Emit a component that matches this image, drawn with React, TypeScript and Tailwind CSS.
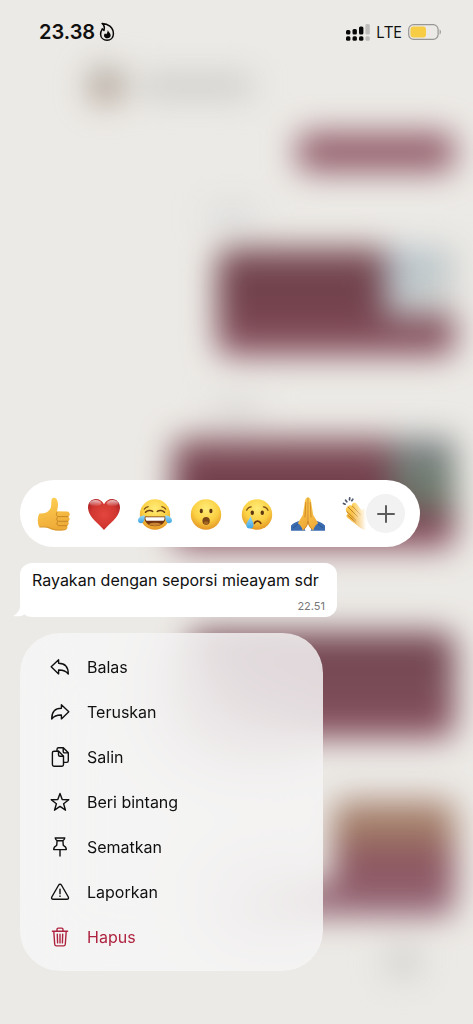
import type { ReactNode } from 'react';

function Flame() {
  return (
    <svg viewBox="0 0 16 20" className="h-5 w-4" fill="none" stroke="#080808" strokeWidth="1.5" strokeLinejoin="round">
      <path d="M3.1 1.4C8.5 1.3 14.6 5.3 14.4 11.9c-.1 3.8-2.8 6.3-6.3 6.3-3.6 0-6.400-2.400-6.500-6-.1-2.300.7-3.700 1.700-5.400l1.700 1.700C5.900 5.700 5.200 3.300 3.100 1.400z" />
      <path d="M8.900 8c0 1.700 2.800 3 2.800 5.300 0 1.800-1.500 3-3.300 3s-3.400-1.100-3.400-2.900c0-.9.5-1.600 1.100-2.100.3.600.6.900 1.100 1 .9-1 1.400-2.300 1.700-4.300z" fill="#080808" stroke="none" />
    </svg>
  );
}

function Signal() {
  return (
    <svg viewBox="0 0 24 17" className="h-[17px] w-6" fill="#080808">
      <rect x="0" y="6" width="4.400" height="4.600" rx="1.500" />
      <rect x="6.500" y="5" width="4.400" height="5.600" rx="1.500" />
      <rect x="13" y="2.500" width="4.400" height="8.100" rx="1.500" />
      <rect x="0" y="12.300" width="4.400" height="4.400" rx="1.500" />
      <rect x="6.500" y="12.300" width="4.400" height="4.400" rx="1.500" />
      <rect x="13" y="12.300" width="4.400" height="4.400" rx="1.500" />
      <g fill="#bebdbb">
        <rect x="19.400" y="0" width="4.400" height="10.600" rx="1.500" />
        <rect x="19.400" y="12.300" width="4.400" height="4.400" rx="1.500" />
      </g>
    </svg>
  );
}

function Battery() {
  return (
    <svg viewBox="0 0 34 16" className="h-4 w-[34px]" fill="none">
      <rect x=".7" y=".7" width="29.400" height="14.600" rx="4.800" stroke="#989694" strokeWidth="1.200" />
      <rect x="2.500" y="2.500" width="15.500" height="11" rx="3" fill="#f7cd45" />
      <path d="M31.600 5.500c1.700.6 1.700 4.400 0 5z" fill="#989694" />
    </svg>
  );
}

function Gradients() {
  return (
    <svg className="absolute h-0 w-0" aria-hidden="true">
      <defs>
        <radialGradient id="face" cx=".5" cy=".3" r=".75">
          <stop offset="0" stopColor="#ffec78" />
          <stop offset=".55" stopColor="#fbd043" />
          <stop offset="1" stopColor="#e08c20" />
        </radialGradient>
        <linearGradient id="skin" x1="0" y1="0" x2=".3" y2="1">
          <stop offset="0" stopColor="#ffd254" />
          <stop offset="1" stopColor="#efab38" />
        </linearGradient>
        <radialGradient id="heart" cx=".5" cy=".5" r=".65">
          <stop offset="0" stopColor="#e2463d" />
          <stop offset=".6" stopColor="#d13630" />
          <stop offset="1" stopColor="#a51d22" />
        </radialGradient>
        <linearGradient id="shine" x1="0" y1="0" x2="0" y2="1">
          <stop offset="0" stopColor="#fff" stopOpacity=".7" />
          <stop offset="1" stopColor="#fff" stopOpacity="0" />
        </linearGradient>
        <linearGradient id="tear" x1="0" y1="0" x2="0" y2="1">
          <stop offset="0" stopColor="#9bdcf8" />
          <stop offset="1" stopColor="#3fa4e4" />
        </linearGradient>
      </defs>
    </svg>
  );
}

function ThumbsUp() {
  return (
    <g transform="translate(1 0)">
      <path d="M2.500 16.600c5.500.2 8.600-1.300 10.500-4.300 1-1.600 1.300-3.700 1.300-6.300 0-2.700.4-5.200 2.500-5.200 2.800 0 4.200 3.300 4.200 7 0 2.500-.6 4.200-1 6.500l10 .2c3.300.1 3.600 4.400 1.100 5.200 2.100.9 1.800 4.100-.3 4.700 1.600 1.100 1.100 3.800-.8 4.300 1 1.500.4 3.800-1.700 4.200-3.700.7-8.300.9-12.300.1-3.500-.7-5.800-2.700-9-2.700L2.500 30.200C.2 27 .3 19.500 2.500 16.600z" fill="url(#skin)" />
      <path d="M31 19.600h-9.500c-2.300-.1-2.900-2.600-1.300-4.300M31 24.300h-9.300c-2-.2-2.600-2.200-1.400-4.100M30 28.700h-8.300c-1.800-.3-2.300-2.300-1.200-4" fill="none" stroke="#c08222" strokeWidth=".9" strokeLinecap="round" />
      <path d="M2.500 30.100c3-.1 5.500-.2 7.500.1 3.200.4 5.500 2.300 9 2.700 3 .4 6.500.1 9.500-.3" fill="none" stroke="#c98c2a" strokeWidth=".7" />
    </g>
  );
}

function Heart() {
  return (
    <>
      <path d="M17 33C12 27 1 19.800 1 10.500 1 5.500 4.500 2 8.800 2c3.700 0 6.500 2 8.200 5.200C18.700 4 21.500 2 25.200 2 29.500 2 33 5.500 33 10.500 33 19.800 22 27 17 33z" fill="url(#heart)" />
      <ellipse cx="8.500" cy="6.300" rx="5.800" ry="3.200" fill="url(#shine)" />
      <ellipse cx="25.500" cy="6.300" rx="5.800" ry="3.200" fill="url(#shine)" />
    </>
  );
}

function Joy() {
  return (
    <>
      <circle cx="17" cy="17.500" r="15.200" fill="url(#face)" />
      <path d="M7.500 15.300c1.500-2 5.200-2.400 7.200-.9M19.300 14.400c2-1.500 5.700-1.100 7.200.9" fill="none" stroke="#6b3d10" strokeWidth="1.500" strokeLinecap="round" />
      <path d="M6.300 12.200c.9-1.300 2.200-2.200 3.900-2.500M27.700 12.200c-.9-1.300-2.200-2.200-3.900-2.500" fill="none" stroke="#7e5017" strokeWidth="1.200" strokeLinecap="round" />
      <path d="M6.200 19.500h21.600c.3 5.500-4.300 9.800-10.800 9.800S5.900 25 6.200 19.500z" fill="#70320f" />
      <path d="M7.400 20.200h19.200c.1 1.600-.4 3.300-1.300 3.600H8.700c-.9-.3-1.400-2-1.300-3.600z" fill="#fff" />
      <path d="M10.500 27c3.500-1.800 9.500-1.800 13 0-3.500 2.500-9.500 2.500-13 0z" fill="#c98532" />
      <path d="M6.800 18.200c-3.800.4-6.800 2.400-6.800 5.200 0 1.900 1.600 2.900 3.100 2.800 3-.2 3.700-4.400 3.700-8zM27.200 18.200c3.800.4 6.800 2.400 6.800 5.200 0 1.900-1.600 2.900-3.100 2.800-3-.2-3.700-4.400-3.700-8z" fill="url(#tear)" />
    </>
  );
}

function Surprised() {
  return (
    <>
      <circle cx="17" cy="17.500" r="15.200" fill="url(#face)" />
      <ellipse cx="12.300" cy="14" rx="1.600" ry="2.300" fill="#5e3611" />
      <ellipse cx="21.900" cy="14" rx="1.600" ry="2.300" fill="#5e3611" />
      <ellipse cx="17.100" cy="23.800" rx="3.700" ry="3.900" fill="#7a4617" />
      <ellipse cx="17.100" cy="25.700" rx="2.500" ry="1.500" fill="#a46723" />
    </>
  );
}

function Crying() {
  return (
    <>
      <circle cx="17" cy="17.500" r="15.200" fill="url(#face)" />
      <ellipse cx="12.300" cy="15.700" rx="1.700" ry="2.300" fill="#5e3611" />
      <ellipse cx="22.300" cy="15.700" rx="1.700" ry="2.300" fill="#5e3611" />
      <path d="M6.600 13.200c.9-1.900 2.500-3.200 4.600-3.400M28 13.200c-.9-1.900-2.500-3.200-4.600-3.400" fill="none" stroke="#7e5017" strokeWidth="1.300" strokeLinecap="round" />
      <path d="M14.300 26.300c1.300-2.900 5.300-2.900 6.600 0" fill="none" stroke="#70390f" strokeWidth="1.600" strokeLinecap="round" />
      <path d="M10.600 19c1.100 3.600 2.900 6.300 2.900 9a3.600 3.600 0 0 1-7.200 0c0-2.700 3.100-5.300 4.300-9z" fill="url(#tear)" />
    </>
  );
}

function Praying() {
  return (
    <>
      <path d="M0 28.500c2.500-2.600 5.700-4.100 9-4.800l5.500 10.100H0zM34 28.500c-2.500-2.600-5.700-4.100-9-4.800l-5.500 10.100H34z" fill="#3c6cb0" />
      <path d="M16.900.5c-2.300 0-2.900 2.500-3.300 6L11.800 18l-5 8.200c2.400 1.600 4.200 4.100 5 7.300 2.900-1.700 4.500-4.600 5.100-8z" fill="url(#skin)" />
      <path d="M17.100.5c2.300 0 2.900 2.500 3.300 6L22.200 18l5 8.200c-2.400 1.600-4.200 4.100-5 7.300-2.900-1.700-4.500-4.600-5.100-8z" fill="url(#skin)" />
      <path d="M17 1v24.500M14.800 5.500L14 20M19.200 5.500L20 20M17 25c-.6 3-2 5.500-4 7M17 25c.6 3 2 5.500 4 7" fill="none" stroke="#c97c1b" strokeWidth=".8" strokeLinecap="round" />
      <path d="M2 31l5-4M32 31l-5-4" stroke="#285695" strokeWidth="1" />
    </>
  );
}

function Clapping() {
  return (
    <>
      <g fill="none" stroke="#4c566b" strokeWidth="1.700" strokeLinecap="round">
        <path d="M1.500 6.400l1.600.8M3.600 3.200l1.200 1.600M7.700.900l-.2 1.900M10.800 2.200l-1 1.500" />
      </g>
      <path d="M5.500 10c.8-2.200 3.200-2.400 4.800-.8L9.900 7.600C11 5.200 13.600 5.300 15 7.200l5.300 7c-.5-2.400 2.200-3.300 3-1 .8 3.500 1.200 6.200 3.200 8.600l5 6-6 6.200c-4-.8-7.500-2.700-10.500-5.700l-9.500-7.500c-1.900-1.700-1.100-3.600.6-3.600l-1.500-2.300c-1.400-2-.7-4.300.9-4.900z" fill="url(#skin)" />
      <path d="M6 10l9.500 9.500M4.900 14.700l9 8.600M10.300 9l8.500 9M6 18.500l7.500 6.500" fill="none" stroke="#c07c1d" strokeWidth="1" strokeLinecap="round" />
    </>
  );
}

const reactions: { name: string; art: ReactNode }[] = [
  { name: 'Jempol', art: <ThumbsUp /> },
  { name: 'Hati', art: <Heart /> },
  { name: 'Tertawa', art: <Joy /> },
  { name: 'Terkejut', art: <Surprised /> },
  { name: 'Menangis', art: <Crying /> },
  { name: 'Terima kasih', art: <Praying /> },
  { name: 'Tepuk tangan', art: <Clapping /> },
];

const actions: { label: string; art: ReactNode; danger?: boolean }[] = [
  { label: 'Balas', art: <path d="M8.600 2.700v3.500c6.200 0 9.700 3.600 9.700 10.800-2.400-3.200-5.200-4.100-9.700-4v3.900L1.200 9.800z" /> },
  { label: 'Teruskan', art: <path d="M11.400 2.700v3.500c-6.200 0-9.700 3.600-9.700 10.800 2.400-3.200 5.200-4.100 9.700-4v3.900l7.400-7.100z" /> },
  {
    label: 'Salin',
    art: (
      <>
        <path d="M4 4.200h4.700l4.800 5v8.400c0 1-.6 1.600-1.600 1.600H4c-1 0-1.600-.6-1.600-1.600V5.800c0-1 .6-1.600 1.600-1.600z" />
        <path d="M8.500 4.300v3.500c0 1 .5 1.500 1.500 1.500h3.400" />
        <path d="M7 4V2.500C7 1.500 7.600.8 8.600.8h4.700l5 5v8c0 1-.6 1.600-1.600 1.600h-3M13.200 1v3.400c0 1 .5 1.500 1.500 1.500H18" />
      </>
    ),
  },
  { label: 'Beri bintang', art: <path d="M10 1.400l2.200 6.200 6.600.2-5.200 4 1.900 6.400-5.500-3.800-5.500 3.800 1.900-6.400-5.200-4 6.600-.2z" /> },
  {
    label: 'Sematkan',
    art: (
      <>
        <path d="M5.200 1h9.600c-.2 1.300-.9 2.100-1.900 2.700l.4 4.700c2 .9 3 2.200 3 4.200H3.700c0-2 1-3.300 3-4.200l.4-4.700C6.100 3.100 5.400 2.300 5.200 1z" />
        <path d="M10 12.800v6.300M7.400 3.700h5.200" />
      </>
    ),
  },
  {
    label: 'Laporkan',
    art: (
      <>
        <path d="M8.700 3c.6-1 2.100-1 2.700 0l6.900 12c.6 1.100-.1 2.300-1.300 2.300H3.100c-1.200 0-1.900-1.200-1.300-2.300z" />
        <path d="M10 7.200v4.500M10 14v.4" />
      </>
    ),
  },
  {
    label: 'Hapus',
    art: (
      <>
        <path d="M2.400 4.200h15.200M7 4V2.400c0-.8.500-1.300 1.300-1.300h3.400c.8 0 1.300.5 1.300 1.300V4M3.800 4.400l.9 12.900c.1 1 .7 1.600 1.700 1.600h7.200c1 0 1.600-.6 1.700-1.600l.9-12.900" />
        <path d="M7.300 7.300l.3 8.600M10 7.300v8.600M12.700 7.300l-.3 8.600" />
      </>
    ),
    danger: true,
  },
];

function BlurredChat() {
  return (
    <div className="pointer-events-none absolute inset-0 overflow-hidden bg-[#eceae6]" aria-hidden="true">
      <div className="flex flex-col pr-[18px] blur-[16px]">
        <div className="mt-[68px] flex items-center gap-4 pl-[88px]">
          <div className="h-9 w-9 rounded-full bg-linear-to-b from-[#9c9c94] to-[#b79c8b]" />
          <div className="h-5 w-28 bg-[#c8c8c5]" />
        </div>
        <div className="mt-7 h-10 w-[158px] self-end rounded-xl bg-[#935e6b]" />
        <div className="mt-9 ml-[208px] h-4 w-12 bg-[#d4d7d8]" />
        <div className="mt-6 flex h-[108px] w-[238px] self-end rounded-xl bg-linear-to-b from-[#784c53] via-[#703f4a] to-[#8f5866]">
          <div className="ml-auto h-[68px] w-[70px] bg-linear-to-br from-[#abbac8] via-[#c0c9ca] to-[#dad6d2]" />
        </div>
        <div className="mt-[46px] ml-[212px] h-4 w-12 bg-[#d5d4d2]" />
        <div className="mt-5 flex h-[110px] w-[282px] self-end rounded-xl bg-linear-to-b from-[#865761] via-[#6d3846] to-[#8c5262]">
          <div className="ml-auto h-[72px] w-16 bg-linear-to-b from-[#7c8286] to-[#667561]" />
        </div>
        <div className="mt-[84px] h-[106px] w-[266px] self-end rounded-xl bg-linear-to-b from-[#734450] via-[#784c57] to-[#8a5060]" />
        <div className="mt-[62px] h-[84px] w-[122px] self-end rounded-t-xl bg-linear-to-b from-[#ac8878] via-[#a07a62] via-45% to-[#8d5862] to-60%" />
        <div className="h-8 w-[236px] self-end rounded-b-xl bg-[#926271]" />
        <div className="mt-8 mr-9 h-7 w-8 self-end bg-[#cfcecc]" />
      </div>
    </div>
  );
}

export default function App() {
  return (
    <div className="relative flex min-h-screen flex-col overflow-hidden font-['Inter','Liberation_Sans',sans-serif] text-[#101010]">
      <BlurredChat />
      <Gradients />

      <header className="relative flex h-16 items-center justify-between pr-[31px] pl-[39px]">
        <div className="flex items-center gap-1">
          <time className="text-xl font-semibold">23.38</time>
          <Flame />
        </div>
        <div className="flex items-center gap-[6px]">
          <Signal />
          <span className="font-['Open_Sans',sans-serif] text-base font-medium">LTE</span>
          <Battery />
        </div>
      </header>

      <main className="relative mt-auto flex flex-col items-start px-5 pb-[53px]">
        <div className="flex h-[67px] w-full max-w-[400px] items-center rounded-full bg-white pr-[15px] pl-4">
          <div className="flex min-w-0 flex-1 gap-[17px] overflow-hidden mask-r-from-[calc(100%-14px)] mask-r-to-100%">
            {reactions.map(({ name, art }) => (
              <button key={name} type="button" aria-label={name} className="shrink-0">
                <svg viewBox="0 0 34 34" className="h-[34px] w-[34px]">{art}</svg>
              </button>
            ))}
          </div>
          <button type="button" aria-label="Tambah reaksi" className="grid h-[39px] w-[39px] shrink-0 place-items-center rounded-full bg-[#f2f2f2]">
            <svg viewBox="0 0 18 18" className="h-[18px] w-[18px]" stroke="#5c5c5c" strokeWidth="2" strokeLinecap="round">
              <path d="M9 1v16M1 9h16" />
            </svg>
          </button>
        </div>

        <article className="relative mt-4 flex h-[54px] min-w-[317px] flex-col rounded-xl bg-white px-3 pt-1">
          <svg viewBox="0 0 20 18" className="absolute bottom-0 -left-[7px] h-[18px] w-5" fill="#fff">
            <path d="M7 0v7c0 4-2.500 7.500-6.700 10 4.400.8 9.300-.1 11.700-2L20 9V0z" />
          </svg>
          <p className="relative text-base leading-[26px] whitespace-nowrap">Rayakan dengan seporsi mieayam sdr</p>
          <time className="self-end text-[11px] leading-[26px] text-[#777]">22.51</time>
        </article>

        <menu className="mt-4 w-[303px] rounded-[40px] bg-[#f7f6f6]/82 pt-[11px] pb-3 backdrop-blur-2xl">
          {actions.map(({ label, art, danger }) => (
            <li key={label}>
              <button
                type="button"
                className={`flex h-[45px] w-full items-center gap-[17px] px-[30px] text-base ${danger ? 'text-[#ae2440]' : ''}`}
              >
                <svg viewBox="0 0 20 20" className="h-5 w-5 shrink-0" fill="none" stroke="currentColor" strokeWidth="1.400" strokeLinejoin="round" strokeLinecap="round">
                  {art}
                </svg>
                {label}
              </button>
            </li>
          ))}
        </menu>
      </main>
    </div>
  );
}
